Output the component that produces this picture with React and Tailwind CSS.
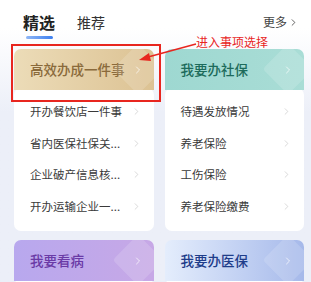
import React from 'react';
import { ChevronRight } from 'lucide-react';

const cards = [
  {
    title: '高效办成一件事',
    head: 'bg-gradient-to-r from-[#ecdcb8] to-[#dcc293]',
    text: 'text-[#8a6a3b]',
    items: ['开办餐饮店一件事', '省内医保社保关...', '企业破产信息核...', '开办运输企业一...'],
  },
  {
    title: '我要办社保',
    head: 'bg-gradient-to-r from-[#9ed8d1] to-[#a9ddd6]',
    text: 'text-[#1d6b5b]',
    items: ['待遇发放情况', '养老保险', '工伤保险', '养老保险缴费'],
  },
  {
    title: '我要看病',
    head: 'bg-gradient-to-r from-[#b8a8ee] to-[#c7a8e6]',
    text: 'text-[#6a3aa6]',
    items: [],
  },
  {
    title: '我要办医保',
    head: 'bg-gradient-to-r from-[#e4edfc] to-[#a6b9ea]',
    text: 'text-[#1f3d8a]',
    items: [],
  },
];

function Card({ card }) {
  return (
    <div className="flex flex-col">
      <div className={`relative h-[41px] rounded-t-[7px] overflow-hidden flex items-center pl-[16px] ${card.head}`}>
        <span className={`text-[13.5px] font-medium ${card.text}`}>{card.title}</span>
        <div className="absolute right-[-2px] top-[2px] w-[36px] h-[36px] bg-white/15 rotate-45 rounded-[4px]" />
        <ChevronRight size={12} strokeWidth={2} className="absolute right-[10px] text-white/70" />
      </div>
      <div className="-mt-[2px] bg-white rounded-[7px] pt-[8px] pb-[9px]">
        {card.items.map((it) => (
          <div key={it} className="h-[31.5px] flex items-center justify-between pl-[16px] pr-[12px]">
            <span className="text-[11.5px] text-[#3a3a3a]">{it}</span>
            <ChevronRight size={11} strokeWidth={1.5} className="text-[#c8c8c8]" />
          </div>
        ))}
      </div>
    </div>
  );
}

export default function App() {
  return (
    <div
      className="relative w-[311px] h-[282px] overflow-hidden bg-gradient-to-b from-white from-[10%] to-[#eceff8] to-[40%]"
      style={{ fontFamily: '"Noto Sans CJK SC", "Noto Sans", sans-serif' }}
    >
      {/* Tabs */}
      <div className="h-[49px] flex items-start pt-[11px] pl-[23px] pr-[12px]">
        <div className="flex flex-col items-center">
          <span className="text-[16px] font-bold text-[#222] leading-[22px]">精选</span>
          <div className="mt-[3px] w-[27px] h-[2.5px] rounded-full bg-gradient-to-r from-[#8fb6f5] to-[#3c7ff0]" />
        </div>
        <span className="ml-[22px] text-[14px] text-[#333] leading-[22px]">推荐</span>
        <div className="ml-auto flex items-center text-[12px] text-[#444] leading-[22px]">
          更多
          <ChevronRight size={11} strokeWidth={1.8} className="ml-[1px]" />
        </div>
      </div>

      {/* Cards */}
      <div className="grid grid-cols-2 gap-x-[11px] gap-y-[9px] pl-[14px] pr-[7px]">
        {cards.map((c) => (
          <Card key={c.title} card={c} />
        ))}
      </div>

      {/* Annotation */}
      <div className="absolute left-[11px] top-[44px] w-[150px] h-[58px] border-2 border-[#e8261f]" />
      <span className="absolute left-[196px] top-[34px] text-[12px] text-[#e8261f] leading-[16px]">进入事项选择</span>
      <svg className="absolute left-0 top-0" width="311" height="282">
        <line x1="196" y1="44" x2="148" y2="57" stroke="#e8261f" strokeWidth="1.6" />
        <polygon points="139,60 149,53 151,61" fill="#e8261f" />
      </svg>
    </div>
  );
}
